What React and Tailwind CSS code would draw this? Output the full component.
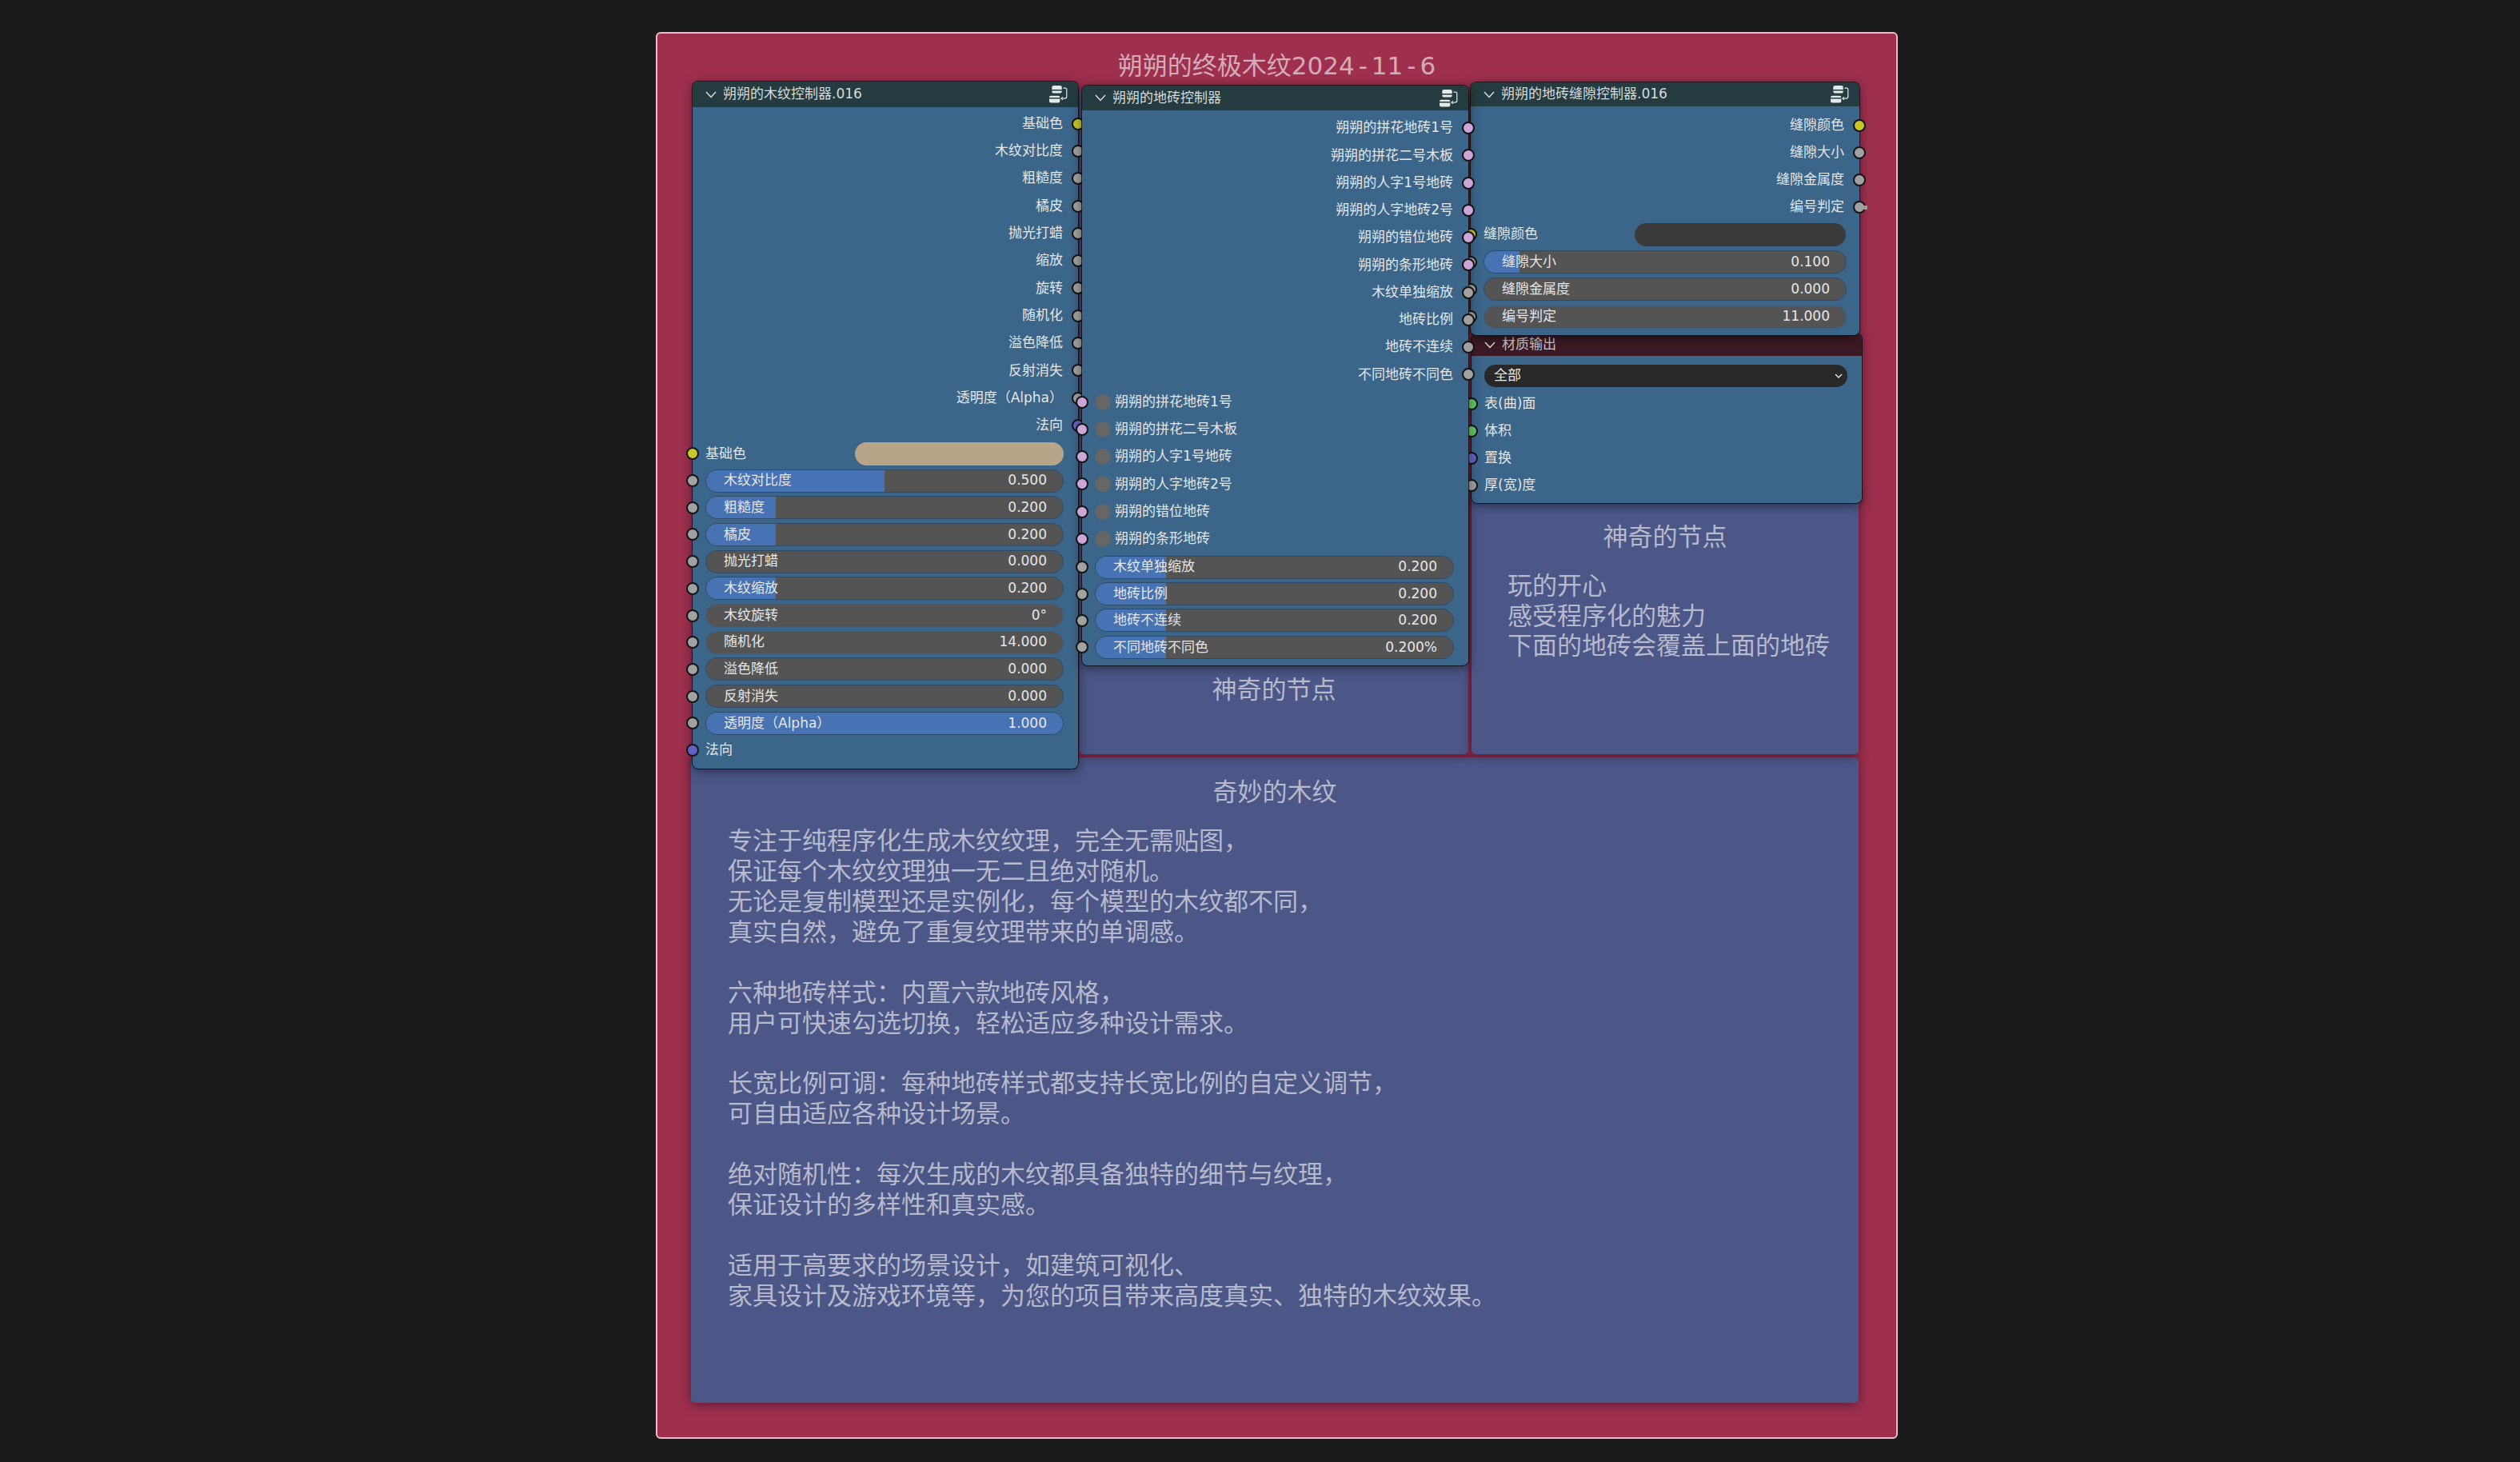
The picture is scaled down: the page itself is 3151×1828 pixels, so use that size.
import React from "react";

const SOCKET = {
  yellow: "bg-[#c7c729]",
  grey: "bg-[#a1a1a1]",
  pink: "bg-[#cca6d6]",
  purple: "bg-[#6363c7]",
  green: "bg-[#63c763]",
};

function Socket({ color, side }) {
  return (
    <span
      className={`absolute top-1/2 -translate-y-1/2 w-[16px] h-[16px] rounded-full border-2 border-[#141414] ${SOCKET[color]} ${
        side === "left" ? "left-[-8px]" : "right-[-8px]"
      }`}
    />
  );
}

function Chevron() {
  return (
    <svg width="14" height="9" viewBox="0 0 14 9" fill="none" className="shrink-0">
      <path d="M1 1l6 6.5L13 1" stroke="#d8dcdc" strokeWidth="1.5" />
    </svg>
  );
}

function GroupIcon() {
  return (
    <svg width="23" height="22" viewBox="0 0 23 22" fill="none" className="shrink-0">
      <path d="M5.3 0h8.4a2 2 0 0 1 2 2v3H3.3V2a2 2 0 0 1 2-2z" fill="#e4e8e8" />
      <path d="M3.3 6.4h12.4V7.4a2 2 0 0 1-2 2H5.3a2 2 0 0 1-2-2z" fill="#e4e8e8" />
      <path d="M2 12.8h9.3a2 2 0 0 1 2 2v.2H0v-.2a2 2 0 0 1 2-2z" fill="#e4e8e8" />
      <path d="M0 16.4h13.3v3.2a2 2 0 0 1-2 2H2a2 2 0 0 1-2-2z" fill="#e4e8e8" />
      <path d="M17.5 3.2h2.6a1.7 1.7 0 0 1 1.7 1.7v8.6a2.6 2.6 0 0 1-2.6 2.6H14.8" stroke="#e4e8e8" strokeWidth="1.2" />
      <path d="M17 14l-2.4 2.1L17 18" stroke="#e4e8e8" strokeWidth="1" />
    </svg>
  );
}

function Header({ title, children }) {
  return (
    <div className="flex items-center h-full pl-4 pr-[13px] gap-[8px] text-[#d6dada] text-[17px]">
      <Chevron />
      <span className="flex-1 whitespace-nowrap">{title}</span>
      {children}
    </div>
  );
}

function Out({ label, color, h = "h-[34.3px]" }) {
  return (
    <div className={`relative flex items-center justify-end pr-[19px] ${h}`}>
      <span className="whitespace-nowrap">{label}</span>
      <Socket color={color} side="right" />
    </div>
  );
}

function InLabel({ label, color, h = "h-[33.7px]" }) {
  return (
    <div className={`relative flex items-center pl-[16px] ${h}`}>
      <span className="whitespace-nowrap">{label}</span>
      <Socket color={color} side="left" />
    </div>
  );
}

function ColorIn({ label, swatch, h = "h-[33.7px]", pr = "pr-[18px]", fieldW }) {
  return (
    <div className={`relative flex items-center justify-between pl-[16px] ${pr} ${h}`}>
      <span className="whitespace-nowrap">{label}</span>
      <span className={`h-[29px] rounded-full ${swatch} ${fieldW}`} />
      <Socket color="yellow" side="left" />
    </div>
  );
}

function Slider({ label, value, pct = 0, flat = false, h = "h-[33.7px]", pr = "pr-[18px]" }) {
  return (
    <div className={`relative flex items-center pl-[16px] ${pr} ${h}`}>
      <div
        className={`relative flex-1 h-[29px] rounded-full overflow-hidden bg-[#545454] border ${
          flat ? "border-[#3f5d7b]" : "border-[#2d4a68]"
        }`}
      >
        <span className="absolute inset-y-0 left-0 bg-[#4772b3]" style={{ width: `${pct}%` }} />
        <div className="relative flex items-center justify-between h-full text-[#e6e6e6] pl-[22px] pr-[20px]">
          <span className="whitespace-nowrap">{label}</span>
          <span>{value}</span>
        </div>
      </div>
      <Socket color="grey" side="left" />
    </div>
  );
}

function Check({ label }) {
  return (
    <div className="relative flex items-center pl-4 gap-[5px] h-[34.25px]">
      <span className="w-[20px] h-[20px] rounded-full bg-[#666666]" />
      <span className="whitespace-nowrap">{label}</span>
      <Socket color="pink" side="left" />
    </div>
  );
}

const wood = [
  ["基础色", "yellow"],
  ["木纹对比度", "grey"],
  ["粗糙度", "grey"],
  ["橘皮", "grey"],
  ["抛光打蜡", "grey"],
  ["缩放", "grey"],
  ["旋转", "grey"],
  ["随机化", "grey"],
  ["溢色降低", "grey"],
  ["反射消失", "grey"],
  ["透明度（Alpha）", "grey"],
  ["法向", "purple"],
];

const woodIn = [
  ["木纹对比度", "0.500", 50],
  ["粗糙度", "0.200", 19.6],
  ["橘皮", "0.200", 19.6],
  ["抛光打蜡", "0.000", 0],
  ["木纹缩放", "0.200", 19.6],
  ["木纹旋转", "0°", 0, true],
  ["随机化", "14.000", 0, true],
  ["溢色降低", "0.000", 0],
  ["反射消失", "0.000", 0],
  ["透明度（Alpha）", "1.000", 100],
];

const tilesOut = [
  ["朔朔的拼花地砖1号", "pink"],
  ["朔朔的拼花二号木板", "pink"],
  ["朔朔的人字1号地砖", "pink"],
  ["朔朔的人字地砖2号", "pink"],
  ["朔朔的错位地砖", "pink"],
  ["朔朔的条形地砖", "pink"],
  ["木纹单独缩放", "grey"],
  ["地砖比例", "grey"],
  ["地砖不连续", "grey"],
  ["不同地砖不同色", "grey"],
];

const tilesCheck = ["朔朔的拼花地砖1号", "朔朔的拼花二号木板", "朔朔的人字1号地砖", "朔朔的人字地砖2号", "朔朔的错位地砖", "朔朔的条形地砖"];

const tilesIn = [
  ["木纹单独缩放", "0.200"],
  ["地砖比例", "0.200"],
  ["地砖不连续", "0.200"],
  ["不同地砖不同色", "0.200%"],
];

const longText = [
  "专注于纯程序化生成木纹纹理，完全无需贴图，",
  "保证每个木纹纹理独一无二且绝对随机。",
  "无论是复制模型还是实例化，每个模型的木纹都不同，",
  "真实自然，避免了重复纹理带来的单调感。",
  "",
  "六种地砖样式：内置六款地砖风格，",
  "用户可快速勾选切换，轻松适应多种设计需求。",
  "",
  "长宽比例可调：每种地砖样式都支持长宽比例的自定义调节，",
  "可自由适应各种设计场景。",
  "",
  "绝对随机性：每次生成的木纹都具备独特的细节与纹理，",
  "保证设计的多样性和真实感。",
  "",
  "适用于高要求的场景设计，如建筑可视化、",
  "家具设计及游戏环境等，为您的项目带来高度真实、独特的木纹效果。",
];

const nodeBase =
  "absolute rounded-[7px] bg-[#3b6589] text-[17px] text-[#e4e6e8] shadow-[0_3px_14px_rgba(0,0,0,0.5),0_0_0_1px_rgba(10,14,20,0.75)]";
const frameBase =
  "absolute rounded-[5px] bg-[#4c5788] text-[#b7b9cc] text-[31px] shadow-[0_2px_14px_rgba(40,10,40,0.6)]";

export default function App() {
  return (
    <div className="min-h-[1828px] bg-[#1b1b1b] pt-[40px] pl-[820px] font-['DejaVu_Sans','Noto_Sans_CJK_SC',sans-serif]">
      <div className="relative w-[1553px] h-[1759px] rounded-[6px] bg-[#9e304e] border-2 border-[#e2c3cc]">
        <div className="flex justify-center items-center h-[80px] text-[31px] text-[#d4abb8] whitespace-nowrap">
          <span>朔朔的终极木纹2024</span>
          <span className="mx-[5px]">-</span>
          <span>11</span>
          <span className="mx-[5px]">-</span>
          <span>6</span>
        </div>

        {/* frames */}
        <section className={`${frameBase} left-[42px] top-[905px] w-[1460px] h-[807px] pt-[24px] pl-[46px]`}>
          <h2 className="text-center pr-[46px] leading-[38px] font-normal">奇妙的木纹</h2>
          <div className="mt-[24px] leading-[37.93px]">
            {longText.map((t, i) => (
              <p key={i} className="h-[37.93px] whitespace-nowrap">{t}</p>
            ))}
          </div>
        </section>

        <section className={`${frameBase} left-[528px] top-[70px] w-[486px] h-[831px] flex flex-col justify-end pb-[62px]`}>
          <h2 className="text-center leading-[38px] font-normal">神奇的节点</h2>
        </section>

        <section className={`${frameBase} left-[1018px] top-[570px] w-[484px] h-[331px] pt-[40px] pl-[45px]`}>
          <h2 className="text-center pr-[45px] leading-[38px] font-normal">神奇的节点</h2>
          <div className="mt-[24px] leading-[37.5px] whitespace-nowrap">
            <p>玩的开心</p>
            <p>感受程序化的魅力</p>
            <p>下面的地砖会覆盖上面的地砖</p>
          </div>
        </section>

        {/* material output */}
        <article className={`${nodeBase} left-[1018px] top-[375px] w-[488px] h-[212px] z-10`}>
          <div className="h-[28px] rounded-t-[7px] bg-[#3c1a25]">
            <div className="flex items-center h-full pl-4 gap-[8px] text-[#c9c5c7] text-[17px]">
              <Chevron />
              <span>材质输出</span>
            </div>
          </div>
          <div className="pl-4 pr-[18px] pt-[11px] h-[42.5px]">
            <div className="flex items-center justify-between h-[28px] rounded-full bg-[#282828] pl-[12px] pr-[6px]">
              <span>全部</span>
              <svg width="10" height="7" viewBox="0 0 10 7" fill="none">
                <path d="M1 1l4 4 4-4" stroke="#e4e6e8" strokeWidth="1.5" />
              </svg>
            </div>
          </div>
          <div>
            <InLabel label="表(曲)面" color="green" h="h-[34px]" />
            <InLabel label="体积" color="green" h="h-[34px]" />
            <InLabel label="置换" color="purple" h="h-[34px]" />
            <InLabel label="厚(宽)度" color="grey" h="h-[34px]" />
          </div>
        </article>

        {/* gap node */}
        <article className={`${nodeBase} left-[1017px] top-[61px] w-[486px] h-[316px] z-20`}>
          <div className="h-[30px] rounded-t-[7px] bg-[#243c3f]">
            <Header title="朔朔的地砖缝隙控制器.016">
              <GroupIcon />
            </Header>
          </div>
          <div className="pt-[7px]">
            <Out label="缝隙颜色" color="yellow" h="h-[34px]" />
            <Out label="缝隙大小" color="grey" h="h-[34px]" />
            <Out label="缝隙金属度" color="grey" h="h-[34px]" />
            <Out label="编号判定" color="grey" h="h-[34px]" />
            <ColorIn label="缝隙颜色" swatch="bg-[#3a3a3a]" h="h-[34.4px]" pr="pr-[17px]" fieldW="w-[264px]" />
            <Slider label="缝隙大小" value="0.100" pct={9.7} h="h-[34.3px]" pr="pr-4" />
            <Slider label="缝隙金属度" value="0.000" h="h-[34.3px]" pr="pr-4" />
            <Slider label="编号判定" value="11.000" flat h="h-[34.3px]" pr="pr-4" />
          </div>
          <span className="absolute left-[490px] top-[154px] w-[6px] h-[5px] rounded-[1px] bg-[#a09a9a]" />
        </article>

        {/* wood node */}
        <article className={`${nodeBase} left-[44px] top-[60px] w-[482px] h-[859px] z-30`}>
          <div className="h-[32px] rounded-t-[7px] bg-[#243c3f]">
            <Header title="朔朔的木纹控制器.016">
              <GroupIcon />
            </Header>
          </div>
          <div className="pt-[3.5px]">
            {wood.map(([l, c]) => (
              <Out key={l} label={l} color={c} />
            ))}
          </div>
          <div className="pt-[1.5px]">
            <ColorIn label="基础色" swatch="bg-[#b8a488]" fieldW="w-[261px]" />
            {woodIn.map(([l, v, p, f]) => (
              <Slider key={l} label={l} value={v} pct={p} flat={f} />
            ))}
            <InLabel label="法向" color="purple" />
          </div>
        </article>

        {/* tile node */}
        <article className={`${nodeBase} left-[531px] top-[65px] w-[483px] h-[725px] z-40`}>
          <div className="h-[31px] rounded-t-[7px] bg-[#243c3f]">
            <Header title="朔朔的地砖控制器">
              <GroupIcon />
            </Header>
          </div>
          <div className="pt-[5px]">
            {tilesOut.map(([l, c]) => (
              <Out key={l} label={l} color={c} h="h-[34.25px]" />
            ))}
            {tilesCheck.map((l) => (
              <Check key={l} label={l} />
            ))}
          </div>
          <div className="pt-[1.5px]">
            {tilesIn.map(([l, v]) => (
              <Slider key={l} label={l} value={v} pct={19.6} h="h-[33.4px]" />
            ))}
          </div>
        </article>
      </div>
    </div>
  );
}
